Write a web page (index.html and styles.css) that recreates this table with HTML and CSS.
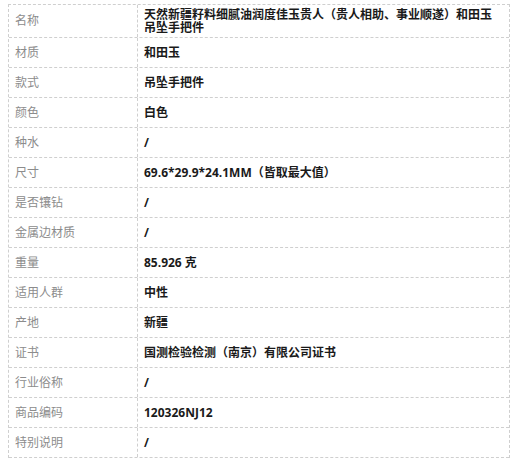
FILE: index.html
```html
<!DOCTYPE html>
<html lang="zh">
<head>
<meta charset="utf-8">
<link rel="stylesheet" href="styles.css">
</head>
<body>
<div class="spec">
  <div class="row row-first"><div class="label">名称</div><div class="value multi">天然新疆籽料细腻油润度佳玉贵人（贵人相助、事业顺遂）和田玉<br>吊坠手把件</div></div>
  <div class="row"><div class="label">材质</div><div class="value">和田玉</div></div>
  <div class="row"><div class="label">款式</div><div class="value">吊坠手把件</div></div>
  <div class="row"><div class="label">颜色</div><div class="value">白色</div></div>
  <div class="row"><div class="label">种水</div><div class="value">/</div></div>
  <div class="row"><div class="label">尺寸</div><div class="value">69.6*29.9*24.1MM（皆取最大值）</div></div>
  <div class="row"><div class="label">是否镶钻</div><div class="value">/</div></div>
  <div class="row"><div class="label">金属边材质</div><div class="value">/</div></div>
  <div class="row"><div class="label">重量</div><div class="value">85.926 克</div></div>
  <div class="row"><div class="label">适用人群</div><div class="value">中性</div></div>
  <div class="row"><div class="label">产地</div><div class="value">新疆</div></div>
  <div class="row"><div class="label">证书</div><div class="value">国测检验检测（南京）有限公司证书</div></div>
  <div class="row"><div class="label">行业俗称</div><div class="value">/</div></div>
  <div class="row"><div class="label">商品编码</div><div class="value">120326NJ12</div></div>
  <div class="row"><div class="label">特别说明</div><div class="value">/</div></div>
</div>
</body>
</html>
```
FILE: styles.css
```css
html, body {
  margin: 0;
  padding: 0;
  background: #fff;
}
body {
  padding: 4px 0 0 8px;
  font-family: "Open Sans", "Noto Sans CJK SC", sans-serif;
  font-size: 12px;
}
.spec {
  width: 502px;
  box-sizing: border-box;
  border-top: 1px dashed #cfcfcf;
  border-left: 1px dashed #cfcfcf;
  border-right: 1px dashed #cfcfcf;
}
.row {
  display: grid;
  grid-template-columns: 129px 1fr;
  height: 30px;
  box-sizing: border-box;
  border-bottom: 1px dashed #cfcfcf;
}
.row-first {
  height: 33px;
}
.label {
  display: flex;
  align-items: center;
  padding-left: 6px;
  border-right: 1px dashed #cfcfcf;
  color: #8c8c8c;
  line-height: 14px;
}
.value {
  display: flex;
  align-items: center;
  padding: 0 6px;
  color: #1a1a1a;
  font-weight: 700;
  line-height: 14px;
}
.value.multi {
  display: block;
  padding-top: 3px;
  line-height: 13px;
}
```
